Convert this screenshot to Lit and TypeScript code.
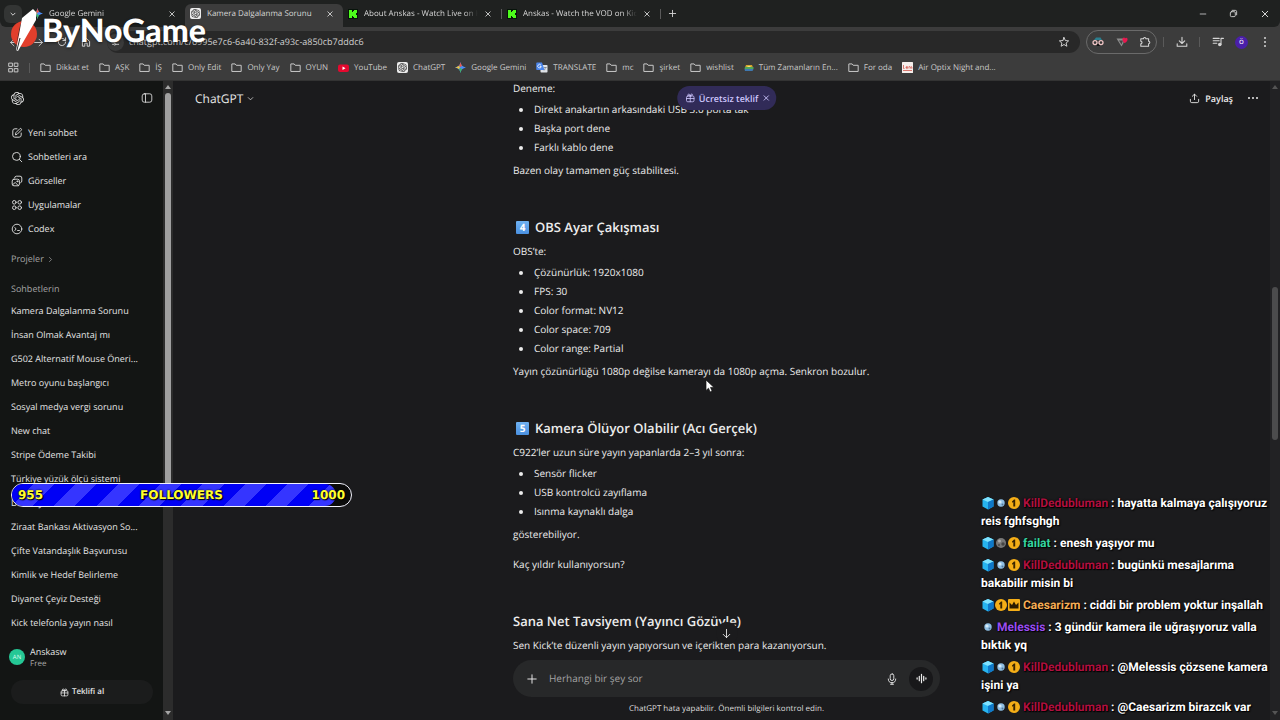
import { LitElement, html, svg, css, nothing } from "lit";
import { customElement, property } from "lit/decorators.js";

const line = (size: number, body: unknown, width = 1.6) => html`
  <svg width=${size} height=${size} viewBox="0 0 20 20" fill="none" stroke="currentColor"
    stroke-width=${width} stroke-linecap="round" stroke-linejoin="round" aria-hidden="true">${body}</svg>`;

const knot = (size: number) => html`
  <svg width=${size} height=${size} viewBox="0 0 24 24" fill="currentColor" aria-hidden="true">
    <path d="M22.2819 9.8211a5.9847 5.9847 0 0 0-.5157-4.9108 6.0462 6.0462 0 0 0-6.5098-2.9A6.0651 6.0651 0 0 0 4.9807 4.1818a5.9847 5.9847 0 0 0-3.9977 2.9 6.0462 6.0462 0 0 0 .7427 7.0966 5.98 5.98 0 0 0 .511 4.9107 6.051 6.051 0 0 0 6.5146 2.9001A5.9847 5.9847 0 0 0 13.2599 24a6.0557 6.0557 0 0 0 5.7718-4.2058 5.9894 5.9894 0 0 0 3.9977-2.9001 6.0557 6.0557 0 0 0-.7475-7.0729zm-9.022 12.6081a4.4755 4.4755 0 0 1-2.8764-1.0408l.1419-.0804 4.7783-2.7582a.7948.7948 0 0 0 .3927-.6813v-6.7369l2.02 1.1686a.071.071 0 0 1 .038.052v5.5826a4.504 4.504 0 0 1-4.4945 4.4944zm-9.6607-4.1254a4.4708 4.4708 0 0 1-.5346-3.0137l.142.0852 4.783 2.7582a.7712.7712 0 0 0 .7806 0l5.8428-3.3685v2.3324a.0804.0804 0 0 1-.0332.0615L9.74 19.9502a4.4992 4.4992 0 0 1-6.1408-1.6464zM2.3408 7.8956a4.485 4.485 0 0 1 2.3655-1.9728V11.6a.7664.7664 0 0 0 .3879.6765l5.8144 3.3543-2.0201 1.1685a.0757.0757 0 0 1-.071 0l-4.8303-2.7865A4.504 4.504 0 0 1 2.3408 7.872zm16.5963 3.8558L13.1038 8.364 15.1192 7.2a.0757.0757 0 0 1 .071 0l4.8303 2.7913a4.4944 4.4944 0 0 1-.6765 8.1042v-5.6772a.79.79 0 0 0-.407-.667zm2.0107-3.0231l-.142-.0852-4.7735-2.7818a.7759.7759 0 0 0-.7854 0L9.409 9.2297V6.8974a.0662.0662 0 0 1 .0284-.0615l4.8303-2.7866a4.4992 4.4992 0 0 1 6.6802 4.66zM8.3065 12.863l-2.02-1.1638a.0804.0804 0 0 1-.038-.0567V6.0742a4.4992 4.4992 0 0 1 7.3757-3.4537l-.142.0805L8.704 5.459a.7948.7948 0 0 0-.3927.6813zm1.0976-2.3654l2.602-1.4998 2.6069 1.4998v2.9994l-2.5974 1.4997-2.6067-1.4997Z"/>
  </svg>`;

const icons = {
  chevron: svg`<path d="m5 8 5 5 5-5"/>`,
  chevronRight: svg`<path d="m7 4 6 6-6 6"/>`,
  close: svg`<path d="m4.5 4.5 11 11M15.500 4.500l-11 11"/>`,
  plus: svg`<path d="M10 3v14M3 10h14"/>`,
  back: svg`<path d="M17 10H3M9 4l-6 6 6 6"/>`,
  forward: svg`<path d="M3 10h14M11 4l6 6-6 6"/>`,
  reload: svg`<path d="M16 10a6 6 0 1 1-2-4.500L16 7.500M16 3v4.500h-4.500"/>`,
  home: svg`<path d="M4 9v8h4v-5h4v5h4V9l-6-5.500z"/>`,
  tune: svg`<path d="M3 6h6M14 6h3M3 14h3M11 14h6"/><circle cx="11.500" cy="6" r="2"/><circle cx="8.500" cy="14" r="2"/>`,
  star: svg`<path d="m10 2.500 2.200 5.100 5.500.500-4.200 3.600 1.300 5.400L10 14.200l-4.800 2.900 1.300-5.400L2.300 8.100l5.500-.500z"/>`,
  puzzle: svg`<path d="M3 4.500h4.500a2 2 0 0 1 4 0H16v4.300a2 2 0 0 1 0 4V17H3v-4.200a2 2 0 0 0 0-4z"/>`,
  download: svg`<path d="M10 2v10M5.500 8 10 12.500 14.500 8M2 13v4h16v-4"/>`,
  queue: svg`<path d="M2 4h10M2 8h10M2 12h6M15 14V4h4"/><circle cx="13" cy="14" r="2" fill="currentColor"/>`,
  minimize: svg`<path d="M3 10h14"/>`,
  restore: svg`<rect x="3" y="6" width="11" height="11" rx="2.500"/><path d="M7 3h7a3 3 0 0 1 3 3v7"/>`,
  apps: svg`<rect x="2" y="2" width="6" height="6"/><rect x="12" y="2" width="6" height="6"/><rect x="2" y="12" width="6" height="6"/><rect x="12" y="12" width="6" height="6"/>`,
  folder: svg`<path d="M1.500 16.500v-13h6l2 2.500h9v10.500z"/>`,
  panel: svg`<rect x="2" y="3" width="16" height="14" rx="3.500"/><path d="M7.500 3v14"/>`,
  compose: svg`<path d="M10 3H6.500A3.500 3.500 0 0 0 3 6.500v7A3.500 3.500 0 0 0 6.500 17h7a3.500 3.500 0 0 0 3.500-3.500V10M7.500 12.500l.6-3 6.600-6.600a1.700 1.700 0 0 1 2.400 2.400l-6.600 6.600z"/>`,
  search: svg`<circle cx="9" cy="9" r="6.500"/><path d="m14 14 4 4"/>`,
  images: svg`<rect x="2" y="7" width="12" height="11" rx="3"/><path d="M6 4.500A3 3 0 0 1 9 2h6a3 3 0 0 1 3 3v5a3 3 0 0 1-2 3M3 16l4-3.500 5 5"/><circle cx="10.500" cy="10.500" r=".9"/>`,
  grid: svg`<circle cx="5.500" cy="5.500" r="3"/><circle cx="14.500" cy="5.500" r="3"/><circle cx="5.500" cy="14.500" r="3"/><circle cx="14.500" cy="14.500" r="3"/>`,
  codex: svg`<circle cx="10" cy="10" r="8"/><path d="m6.500 7.500 2 2.500-2 2.500M11 12.500h3"/>`,
  gift: svg`<rect x="2.500" y="6" width="15" height="11.500" rx="2.500"/><path d="M2.500 11h15M10 6v11.500M10 6C8 6 5.500 5.500 5.500 3.700 5.500 1 9.500 1.500 10 6c.5-4.500 4.500-5 4.500-2.300C14.500 5.500 12 6 10 6z"/>`,
  share: svg`<path d="M10 12V2.500M6 6l4-4 4 4M2.500 11.500V15A2.500 2.500 0 0 0 5 17.500h10a2.500 2.500 0 0 0 2.500-2.500v-3.500"/>`,
  down: svg`<path d="M10 2.500v15M4 11.500l6 6 6-6"/>`,
  mic: svg`<rect x="7" y="1.500" width="6" height="11" rx="3"/><path d="M3.800 10a6.200 6.200 0 0 0 12.400 0M10 16.200v2.500M7.500 18.700h5"/>`,
  wave: svg`<path d="M2 9v2M6 6v8M10 2.500v15M14 6v8M18 9v2"/>`,
};

const dots = (vertical: boolean) => html`
  <svg width="12" height="12" viewBox="0 0 12 12" fill="currentColor" aria-hidden="true">
    ${[2, 6, 10].map((p) => vertical
      ? svg`<circle cx="6" cy=${p} r="1"/>`
      : svg`<circle cx=${p} cy="6" r="1"/>`)}
  </svg>`;

const sparkle = html`<svg width="11" height="11" viewBox="0 0 20 20" aria-hidden="true">
  <path fill="#4a8df6" d="M10 0c1 6 4 9 10 10-6 1-9 4-10 10C9 14 6 11 0 10 6 9 9 6 10 0z"/>
  <path fill="#e8584a" d="M10 0c.5 3 1.500 5.500 3 7l-3 2-3-2c1.500-1.500 2.500-4 3-7z"/>
  <path fill="#eec23e" d="M0 10c3-.5 5.500-1.500 7-3l2 3-2 3c-1.500-1.500-4-2.500-7-3z"/>
  <path fill="#41b066" d="M10 20c-.5-3-1.500-5.500-3-7l3-2 3 2c-1.500 1.500-2.500 4-3 7z"/></svg>`;
const kick = html`<svg width="10" height="10" viewBox="0 0 10 10" aria-hidden="true">
  <rect width="10" height="10" fill="#07140a"/>
  <path fill="#4dfb1c" d="M1 1h3v2h1V2h1V1h3v3H8v2h1v3H6V8H5V7H4v2H1z"/></svg>`;
const gptTile = html`<span class="tile">${knot(9)}</span>`;
const youtube = html`<svg width="11" height="10" viewBox="0 0 22 20" aria-hidden="true">
  <rect y="3" width="22" height="15" rx="4" fill="#e5092f"/><path d="m9 7 6 3.500L9 14z" fill="#fff"/></svg>`;
const translate = html`<svg width="12" height="11" viewBox="0 0 24 22" aria-hidden="true">
  <rect x="9" y="6" width="14" height="15" rx="1.500" fill="#dfe3e8"/>
  <path d="M2 1h10l5 15H2a1.500 1.500 0 0 1-1.500-1.500v-12A1.500 1.500 0 0 1 2 1z" fill="#4b86ec"/>
  <path d="M10 6.500A3.500 3.500 0 1 0 10.500 9H7.500" stroke="#fff" stroke-width="1.600" fill="none"/>
  <path d="M15.500 11h6M18.500 10v1c0 3-1.500 5-2.500 6" stroke="#66707c" stroke-width="1.300" fill="none"/></svg>`;
const rainbow = html`<svg width="10" height="10" viewBox="0 0 20 20" aria-hidden="true">
  <path d="M4 4h12l2 5H2z" fill="#d2a52c"/><path d="M2 8h17v4H1z" fill="#4fa45a"/><path d="M1 12h18l-2 4H2z" fill="#3f78b0"/><path d="M7 6h6v2H7z" fill="#f4dd7c"/></svg>`;
const lens = html`<svg width="11" height="11" viewBox="0 0 22 22" aria-hidden="true">
  <rect width="22" height="22" rx="1" fill="#f6efec"/>
  <path d="M3 6v7h2M8 11h3.500c0-3-3.500-3-3.500 0s3 3 3.500 1.500M14 13V9m0 1c1-2 3-1 3 1v2M20 9c-2 0-2 2-.5 2s1.500 2-.5 2M2 17h18" stroke="#cf4f45" stroke-width="1.500" fill="none"/></svg>`;
const folder = line(11, icons.folder, 1.8);

const bookmarks: [unknown, string][] = [
  [folder, "Dikkat et"], [folder, "AŞK"], [folder, "İŞ"], [folder, "Only Edit"], [folder, "Only Yay"],
  [folder, "OYUN"], [youtube, "YouTube"], [gptTile, "ChatGPT"], [sparkle, "Google Gemini"],
  [translate, "TRANSLATE"], [folder, "mc"], [folder, "şirket"], [folder, "wishlist"],
  [rainbow, "Tüm Zamanların En..."], [folder, "For oda"], [lens, "Air Optix Night and..."],
];

const tabs = [
  { icon: sparkle, title: "Google Gemini", active: false },
  { icon: gptTile, title: "Kamera Dalgalanma Sorunu", active: true },
  { icon: kick, title: "About Anskas - Watch Live on K", active: false },
  { icon: kick, title: "Anskas - Watch the VOD on Kic", active: false },
];

@customElement("browser-chrome")
class BrowserChrome extends LitElement {
  static styles = css`
    :host { display: block; background: #3c3c3c; color: #d6d6d6; font: 8px/12px "Open Sans", sans-serif; text-rendering: geometricPrecision; }
    svg { display: block; flex: none; }
    button { all: unset; display: grid; place-items: center; flex: none; }
    .strip { display: flex; align-items: center; height: 27px; background: #1f2120; border-radius: 0 0 6px 6px; }
    .find { width: 18px; height: 18px; margin: 0 5px 0 4px; border-radius: 6px; background: #333534; }
    .tab { display: flex; align-items: center; gap: 6px; flex: 0 1 158px; min-width: 0; box-sizing: border-box;
      height: 27px; padding: 0 9px 0 5px; }
    .tab.active { height: 23px; margin-top: 4px; padding-bottom: 4px; background: #3c3c3c; border-radius: 6px 6px 0 0; }
    .label { flex: 1; min-width: 0; overflow: hidden; white-space: nowrap;
      mask-image: linear-gradient(90deg, #000 88%, transparent); }
    .active .label { mask-image: none; }
    .sep { width: 1px; height: 10px; background: #5a5a5a; flex: none; }
    .add { width: 22px; height: 22px; }
    .window { display: flex; margin-left: auto; }
    .window button { width: 31px; height: 26px; }
    .bar { display: flex; align-items: center; height: 28px; padding-top: 2px; box-sizing: border-box; }
    .nav { display: flex; padding: 0 9px 0 2px; }
    .nav button { width: 24px; height: 24px; }
    .address { display: flex; align-items: center; gap: 5px; flex: 1; min-width: 0; height: 22px; border-radius: 11px; background: #282828;
      padding: 0 10px 0 0; }
    .site { width: 17px; height: 17px; border-radius: 50%; background: #3a3a3a; }
    .address input { all: unset; flex: 1; min-width: 0; color: #d0d0d0; font-size: 9px; line-height: 16px; }
    .ext { display: flex; align-items: center; justify-content: space-between; box-sizing: border-box; width: 71px; height: 24px; margin: 0 6px;
      padding: 0 5px; border: 1px solid #6a6a6a; border-radius: 12px; }
    .tool { width: 35px; height: 24px; }
    .me { width: 13px; height: 13px; margin: 0 5px; border-radius: 50%; background: #4a1fa8; color: #fff; font-size: 8px; line-height: 12px; }
    .queue { width: 24px; margin-left: 6px; }
    .menu { width: 24px; margin-right: 3px; }
    .marks { display: flex; align-items: center; gap: 10px; height: 26px; padding: 0 8px; color: #c9c9c9; box-sizing: border-box; border-bottom: 1px solid #333; }
    .marks a { display: flex; align-items: center; gap: 5px; color: inherit; text-decoration: none; white-space: nowrap; }
    .tile { display: grid; place-items: center; width: 11px; height: 11px; border-radius: 2px; background: #ececec; color: #222; flex: none; }
  `;

  render() {
    return html`
      <div class="strip">
        <button class="find" aria-label="Sekmelerde ara">${line(8, icons.chevron, 2.4)}</button>
        ${tabs.map((t, i) => html`
          <div class="tab ${t.active ? "active" : ""}">
            ${t.icon}<span class="label">${t.title}</span>
            <button aria-label="Sekmeyi kapat">${line(8, icons.close, 2.2)}</button>
          </div>
          ${i > 1 ? html`<span class="sep"></span>` : nothing}`)}
        <button class="add" aria-label="Yeni sekme">${line(9, icons.plus, 2)}</button>
        <div class="window">
          <button aria-label="Küçült">${line(8, icons.minimize, 2)}</button>
          <button aria-label="Geri yükle">${line(9, icons.restore, 2)}</button>
          <button aria-label="Kapat">${line(10, icons.close, 2)}</button>
        </div>
      </div>
      <div class="bar">
        <div class="nav">
          <button aria-label="Geri">${line(11, icons.back)}</button>
          <button aria-label="İleri">${line(11, icons.forward)}</button>
          <button aria-label="Yenile">${line(12, icons.reload)}</button>
          <button aria-label="Ana sayfa">${line(12, icons.home)}</button>
        </div>
        <div class="address">
          <button class="site" aria-label="Site bilgileri">${line(9, icons.tune, 2)}</button>
          <input aria-label="Adres" value="chatgpt.com/c/6995e7c6-6a40-832f-a93c-a850cb7dddc6" />
          <button aria-label="Yer işareti ekle">${line(12, icons.star)}</button>
        </div>
        <div class="ext">
          <button aria-label="Gizlilik uzantısı"><svg width="12" height="12" viewBox="0 0 24 24">
            <path d="M4 8 8 3h9l3 5z" fill="#2c7f8f"/><path d="M9 16h7l-1 4h-5z" fill="#111"/>
            <circle cx="6" cy="13" r="4" fill="#333" stroke="#f1c6c6" stroke-width="2.500"/><circle cx="18" cy="13" r="4" fill="#333" stroke="#f1c6c6" stroke-width="2.500"/></svg></button>
          <button aria-label="İndirme uzantısı"><svg width="12" height="12" viewBox="0 0 24 24">
            <path d="M1 5h15l-1 9-4 7z" fill="#8d8d8d"/><path d="M6 9h8l-3 8z" fill="#444"/><path d="M13 5c3-4 5-1 5 0 2-3 6-1 5 3s-5 6-6 6-5-5-4-9z" fill="#e8184f"/></svg></button>
          <button aria-label="Uzantılar">${line(12, icons.puzzle, 1.8)}</button>
        </div>
        <span class="sep"></span>
        <button class="tool" aria-label="İndirilenler">${line(12, icons.download, 1.8)}</button>
        <span class="sep"></span>
        <button class="queue" aria-label="Medya">${line(12, icons.queue, 1.8)}</button>
        <button class="me" aria-label="Profil">ö</button>
        <button class="menu" aria-label="Menü">${dots(true)}</button>
      </div>
      <nav class="marks" aria-label="Yer işaretleri">
        ${line(11, icons.apps, 1.8)}<span class="sep"></span>
        ${bookmarks.map(([icon, name]) => html`<a href="#">${icon}${name}</a>`)}
      </nav>`;
  }
}

const chats = [
  "Kamera Dalgalanma Sorunu", "İnsan Olmak Avantaj mı", "G502 Alternatif Mouse Öneri...", "Metro oyunu başlangıcı",
  "Sosyal medya vergi sorunu", "New chat", "Stripe Ödeme Takibi", "Türkiye yüzük ölçü sistemi", "Duvar yazısı",
  "Ziraat Bankası Aktivasyon So...", "Çifte Vatandaşlık Başvurusu", "Kimlik ve Hedef Belirleme", "Diyanet Çeyiz Desteği",
  "Kick telefonla yayın nasıl",
];
const actions: [unknown, string][] = [
  [icons.compose, "Yeni sohbet"], [icons.search, "Sohbetleri ara"], [icons.images, "Görseller"],
  [icons.grid, "Uygulamalar"], [icons.codex, "Codex"],
];

@customElement("chat-sidebar")
class ChatSidebar extends LitElement {
  static styles = css`
    :host { display: flex; width: 173px; flex: none; background: #131514; color: #e4e4e4; font: 9px/24px "Open Sans", sans-serif; text-rendering: geometricPrecision; }
    svg { display: block; flex: none; }
    button { all: unset; }
    a { color: inherit; text-decoration: none; }
    .col { display: flex; flex-direction: column; flex: 1; min-width: 0; padding: 0 10px 0 11px; }
    .top { display: flex; align-items: center; justify-content: space-between; height: 34px; margin-bottom: 6px; }
    .act { display: flex; align-items: center; gap: 5px; }
    .group { color: #a4a4a4; display: flex; align-items: center; gap: 3px; }
    .projects { margin-top: 6px; }
    .mine { margin-top: 7px; line-height: 21px; }
    .chat { display: block; white-space: nowrap; }
    .user { display: flex; align-items: center; gap: 5px; margin-top: auto; height: 26px; line-height: 13px; margin-left: -2px; }
    .face { display: grid; place-items: center; width: 16px; height: 16px; border-radius: 50%; background: #25c795; color: #d8fff0; font-size: 6px; }
    .plan { display: block; color: #aaa; font-size: 8px; line-height: 12px; }
    .offer { display: flex; align-items: center; justify-content: center; gap: 3px; height: 24px; margin: 10px 0 16px; border-radius: 12px;
      background: #1b1c1c; font-size: 8px; font-weight: 600; }
    .scroll { display: flex; flex-direction: column; align-items: center; width: 10px; background: #2c2c2c; }
    .up, .down { border: 3px solid transparent; }
    .up { border-bottom: 4px solid #a5a5a5; border-top: 0; margin: 4px 0; }
    .down { border-top: 4px solid #a5a5a5; border-bottom: 0; margin: auto 0 5px; }
    .thumb { width: 6px; height: 63%; border-radius: 3px; background: #a0a0a0; }
  `;

  render() {
    return html`
      <div class="col">
        <div class="top">${knot(13)}<button aria-label="Kenar çubuğunu kapat">${line(12, icons.panel, 1.4)}</button></div>
        ${actions.map(([icon, name]) => html`<a class="act" href="#">${line(12, icon, 1.5)}${name}</a>`)}
        <button class="group projects">Projeler ${line(7, icons.chevronRight, 2)}</button>
        <div class="group mine">Sohbetlerin</div>
        ${chats.map((c) => html`<a class="chat" href="#">${c}</a>`)}
        <div class="user"><span class="face">AN</span><span>Anskasw<span class="plan">Free</span></span></div>
        <button class="offer">${line(9, icons.gift, 1.8)}Teklifi al</button>
      </div>
      <div class="scroll"><span class="up"></span><span class="thumb"></span><span class="down"></span></div>`;
  }
}

@customElement("chat-main")
class ChatMain extends LitElement {
  static styles = css`
    :host { display: flex; flex: 1; min-width: 0; position: relative; background: #1b1b1d; color: #ececec; font: 10px/19px "Open Sans", sans-serif; text-rendering: geometricPrecision; }
    svg { display: block; flex: none; }
    button { all: unset; display: flex; align-items: center; }
    .pane { display: flex; flex-direction: column; flex: 1; min-width: 0; padding-left: 10px; }
    .head { position: absolute; top: 0; left: 0; right: 10px; display: flex; align-items: center; height: 34px; padding: 0 11px 0 22px; }
    .model { gap: 3px; font-size: 12px; color: #e8e8e8; }
    .tools { display: flex; align-items: center; gap: 14px; margin-left: auto; }
    .share { gap: 5px; font-size: 9px; font-weight: 600; }
    .pill { position: absolute; top: 5px; left: 50%; transform: translateX(-50%); display: flex; align-items: center; gap: 4px;
      height: 24px; padding: 0 6px 0 8px; border-radius: 12px; background: #312b58; color: #cfc8ff; font-size: 9px; font-weight: 600; white-space: nowrap; }
    .view { flex: 1; min-height: 0; overflow: hidden; }
    .col { width: 100%; max-width: 427px; margin: 0 auto; }
    .text { margin-top: -2px; }
    p { margin: 4px 0 0; }
    p.first { margin: 0; }
    p.apart { margin-top: 11px; }
    ul { margin: 2px 0 0; padding: 0 0 0 21px; list-style: none; }
    li { position: relative; }
    li::before { content: ""; position: absolute; left: -15px; top: 8px; width: 4px; height: 4px; border-radius: 50%; background: #ececec; }
    h3 { display: flex; align-items: center; gap: 6px; margin: 36px 0 0; font-size: 13px; line-height: 22px; font-weight: 600; white-space: nowrap; }
    .key { display: grid; place-items: center; width: 13px; height: 13px; margin-left: 3px; border-radius: 1px;
      background: linear-gradient(#6fb2f2, #4a90e0); color: #fff; font-size: 10px; line-height: 12px; font-weight: 700; }
    .composer { position: relative; }
    .jump { position: absolute; top: -38px; left: 50%; transform: translateX(-50%); width: 22px; height: 22px; justify-content: center;
      background: #1b1b1d; border-radius: 50%; }
    .box { display: flex; align-items: center; gap: 11px; box-sizing: border-box; height: 37px; padding: 0 7px 0 13px; border-radius: 19px; background: #272829; }
    .box input { all: unset; flex: 1; min-width: 0; color: #ececec; }
    .box input::placeholder { color: #a3a3a3; opacity: 1; }
    .voice { width: 24px; height: 24px; justify-content: center; border-radius: 50%; background: #18181a; }
    .note { margin: 0; font-size: 8px; line-height: 23px; text-align: center; color: #dcdcdc; }
    .scroll { display: flex; flex-direction: column; align-items: center; width: 10px; background: #222224; }
    .up, .down { border: 3px solid transparent; }
    .up { border-bottom: 4px solid #555; border-top: 0; margin-top: 4px; }
    .down { border-top: 4px solid #555; border-bottom: 0; margin: auto 0 5px; }
    .thumb { width: 6px; height: 24%; margin-top: 198px; border-radius: 3px; background: #4c4c4d; }
  `;

  private list(items: string[]) {
    return html`<ul>${items.map((i) => html`<li>${i}</li>`)}</ul>`;
  }

  render() {
    return html`
      <div class="pane">
        <div class="view"><article class="col text">
          <p class="first">Deneme:</p>
          ${this.list(["Direkt anakartın arkasındaki USB 3.0 porta tak", "Başka port dene", "Farklı kablo dene"])}
          <p>Bazen olay tamamen güç stabilitesi.</p>
          <h3><span class="key">4</span>OBS Ayar Çakışması</h3>
          <p>OBS’te:</p>
          ${this.list(["Çözünürlük: 1920x1080", "FPS: 30", "Color format: NV12", "Color space: 709", "Color range: Partial"])}
          <p>Yayın çözünürlüğü 1080p değilse kamerayı da 1080p açma. Senkron bozulur.</p>
          <h3><span class="key">5</span>Kamera Ölüyor Olabilir (Acı Gerçek)</h3>
          <p>C922’ler uzun süre yayın yapanlarda 2–3 yıl sonra:</p>
          ${this.list(["Sensör flicker", "USB kontrolcü zayıflama", "Isınma kaynaklı dalga"])}
          <p>gösterebiliyor.</p>
          <p class="apart">Kaç yıldır kullanıyorsun?</p>
          <h3>Sana Net Tavsiyem (Yayıncı Gözüyle)</h3>
          <p>Sen Kick’te düzenli yayın yapıyorsun ve içerikten para kazanıyorsun.</p>
        </article></div>
        <div class="col composer">
          <button class="jump" aria-label="En alta in">${line(11, icons.down, 1.6)}</button>
          <div class="box">
            <button aria-label="Ekle">${line(12, icons.plus, 1.6)}</button>
            <input aria-label="Mesaj" placeholder="Herhangi bir şey sor" />
            <button aria-label="Dikte">${line(12, icons.mic, 1.5)}</button>
            <button class="voice" aria-label="Sesli mod">${line(11, icons.wave, 2.2)}</button>
          </div>
          <p class="note">ChatGPT hata yapabilir. Önemli bilgileri kontrol edin.</p>
        </div>
      </div>
      <header class="head">
        <button class="model">ChatGPT ${line(9, icons.chevron, 1.6)}</button>
        <div class="tools">
          <button class="share">${line(11, icons.share, 1.6)}Paylaş</button>
          <button aria-label="Diğer">${dots(false)}</button>
        </div>
      </header>
      <div class="pill">${line(10, icons.gift, 1.6)}Ücretsiz teklif
        <button aria-label="Teklifi kapat">${line(8, icons.close, 2.2)}</button></div>
      <div class="scroll"><span class="up"></span><span class="thumb"></span><span class="down"></span></div>`;
  }
}

const badges: Record<string, unknown> = {
  cube: svg`<path d="M7 1 12.500 3.500v7L7 13.500 1.500 10.500v-7z" fill="#27b4ef"/><path d="M7 1 12.500 3.500 7 6 1.500 3.500z" fill="#7fe3ff"/><path d="M7 6l5.500-2.500v7L7 13.500z" fill="#0f78c9"/>`,
  orb: svg`<circle cx="7" cy="7" r="3.700" fill="#8fbfe4"/><circle cx="6" cy="6" r="1.600" fill="#d6ebf8"/><circle cx="8.500" cy="8.500" r="1" fill="#56789a"/>`,
  moon: svg`<circle cx="7" cy="7" r="5" fill="#777"/><circle cx="5.500" cy="5" r="1.500" fill="#aaa"/><circle cx="9" cy="8" r="1.700" fill="#444"/><circle cx="5" cy="9" r="1" fill="#4b4b4b"/>`,
  coin: svg`<circle cx="7" cy="7" r="6" fill="#f5ae17"/><path d="M5 5.500 7 3.500h1.200v7H6.300V6L5 6.800z" fill="#3a2500"/>`,
  crown: svg`<rect x="1" y="1" width="12" height="12" rx="1" fill="#f5ae17"/><path d="M2.500 10.500V4.500L5 7l2-3.500L9 7l2.500-2.500v6z" fill="#2a1c00"/>`,
};

type Message = { badges: string[]; name: string; tone: string; text: string };
const kill = { badges: ["cube", "orb", "coin"], name: "KillDedubluman", tone: "red" };
const messages: Message[] = [
  { ...kill, text: "hayatta kalmaya çalışıyoruz reis fghfsghgh" },
  { badges: ["cube", "moon", "coin"], name: "failat", tone: "green", text: "enesh yaşıyor mu" },
  { ...kill, text: "bugünkü mesajlarıma bakabilir misin bi" },
  { badges: ["cube", "coin", "crown"], name: "Caesarizm", tone: "gold", text: "ciddi bir problem yoktur inşallah" },
  { badges: ["orb"], name: "Melessis", tone: "violet", text: "3 gündür kamera ile uğraşıyoruz valla bıktık yq" },
  { ...kill, text: "@Melessis çözsene kamera işini ya" },
  { ...kill, text: "@Caesarizm birazcık var" },
];

@customElement("stream-chat")
class StreamChat extends LitElement {
  static styles = css`
    :host { display: flex; flex-direction: column; gap: 4px; color: #fff; font: 700 12px/18px Roboto, sans-serif; text-rendering: geometricPrecision; text-shadow: 0 0 2px #000, 1px 1px 1px #000; }
    svg { display: inline-block; vertical-align: -3px; margin-right: -1px; }
    .name { margin-left: 3px; }
    .red { color: #b0103f; }
    .green { color: #35d6a0; }
    .gold { color: #f5ad55; }
    .violet { color: #9a4df0; }
  `;
  render() {
    return messages.map((m) => html`<div>${m.badges.map((b) =>
      html`<svg width="14" height="14" viewBox="0 0 14 14" aria-hidden="true">${badges[b]}</svg>`)}<span
      class="name ${m.tone}">${m.name}</span><span> : ${m.text}</span></div>`);
  }
}

@customElement("follower-goal")
class FollowerGoal extends LitElement {
  @property({ type: Number }) value = 0;
  @property({ type: Number }) goal = 1;
  static styles = css`
    :host { display: grid; box-sizing: border-box; border: 1px solid #f4f4ff; border-radius: 12px; background: #0b0b0b; overflow: hidden;
      color: #ffff2e; font: 700 12px/22px "DejaVu Sans", sans-serif; text-rendering: geometricPrecision; text-shadow: 0 0 2px #000, 1px 1px 1px #000; }
    .fill, .row { grid-area: 1 / 1; }
    .fill { border-radius: 0 11px 11px 0;
      background: repeating-linear-gradient(135deg, #0000f5 0 15px, #3535ff 15px 30px); }
    .row { display: grid; grid-template-columns: 1fr auto 1fr; padding: 0 6px; }
    .goal { text-align: right; }
  `;
  render() {
    return html`<div class="fill" style="width:${(this.value / this.goal) * 100}%"></div>
      <div class="row"><span>${this.value}</span><span>FOLLOWERS</span><span class="goal">${this.goal}</span></div>`;
  }
}

@customElement("app-root")
class AppRoot extends LitElement {
  static styles = css`
    :host { display: flex; flex-direction: column; height: 100vh; position: relative; overflow: hidden; background: #1b1b1d; }
    .body { display: flex; flex: 1; min-height: 0; }
    .brand { position: absolute; left: 11px; top: 8px; display: flex; align-items: center; gap: 3px; color: #fff; font: 900 32px/44px Lato, sans-serif;
      text-shadow: 0 1px 3px #0008; text-rendering: geometricPrecision; }
    .goal { position: absolute; left: 11px; top: 483px; width: 341px; }
    .chat { position: absolute; left: 981px; top: 494px; width: 296px; }
    .cursor { position: absolute; left: 705px; top: 379px; }
  `;
  render() {
    return html`
      <browser-chrome></browser-chrome>
      <div class="body"><chat-sidebar></chat-sidebar><chat-main></chat-main></div>
      <div class="brand"><svg width="28" height="44" viewBox="0 0 28 44" aria-hidden="true">
        <circle cx="13" cy="26" r="13" fill="#e23f2c"/>
        <path d="M9 18 12 10 4 42z" fill="#2c2c2c"/>
        <path d="M22 1 25 4v8L7 43l-2-1 3-15 3-17z" fill="#fff"/><path d="M9 30 6 42" stroke="#2c2c2c"/></svg>ByNoGame</div>
      <follower-goal class="goal" .value=${955} .goal=${1000}></follower-goal>
      <stream-chat class="chat"></stream-chat>
      <svg class="cursor" width="10" height="14" viewBox="0 0 10 14" aria-hidden="true"><path d="M1 1v10.500l2.500-2.300 1.600 3.800 2-.9-1.600-3.700H9z" fill="#fff" stroke="#111" stroke-width=".7"/></svg>`;
  }
}
